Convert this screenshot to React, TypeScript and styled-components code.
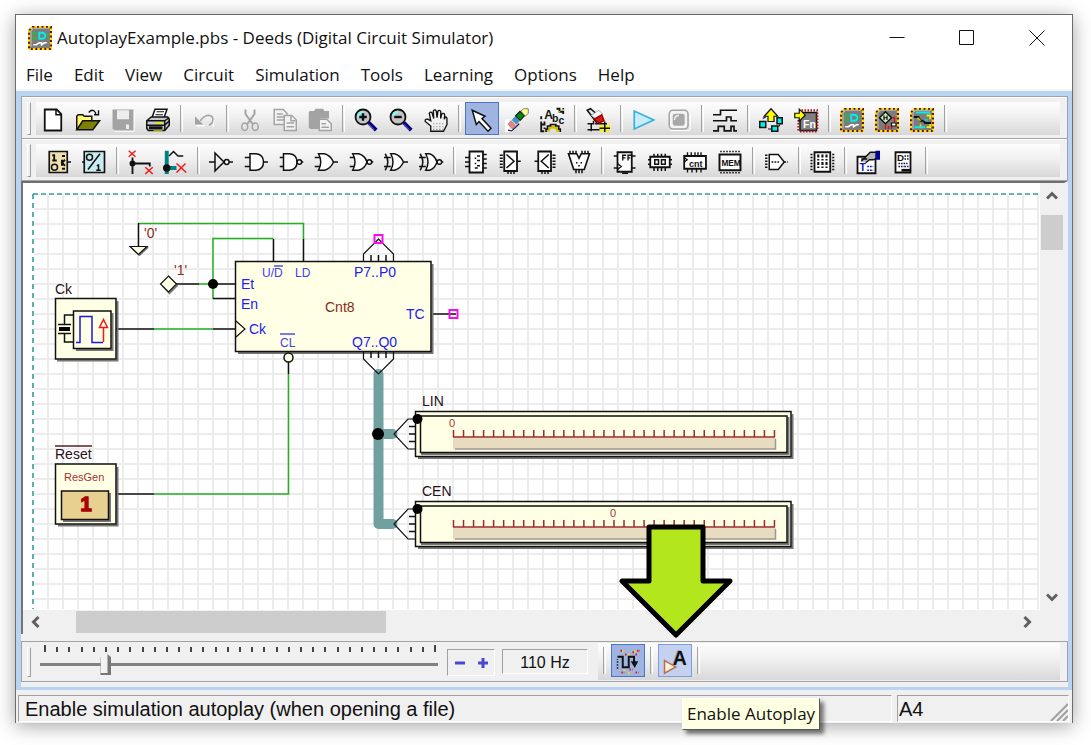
import React from "react";
import styled, { createGlobalStyle, css } from "styled-components";

const ui = `"Open Sans", "Noto Sans", sans-serif`;
const sans = `"Liberation Sans", Arial, sans-serif`;

const Global = createGlobalStyle`
  * { box-sizing: border-box; }
  body { margin: 0; background: #fff; color: #111; font-family: ${ui}; }
  button { font: inherit; color: inherit; border: 0; padding: 0; background: none; }
`;

/* ---------- window frame ---------- */

const Page = styled.div`
  display: flex;
  min-height: 100vh;
  padding: 14px 18px 22px 15px;
`;
const Window = styled.main`
  flex: 1;
  min-width: 0;
  display: flex;
  flex-direction: column;
  border: 1px solid #6c6c6c;
  border-bottom: 0;
  background: #f0f0f0;
  box-shadow: 0 3px 18px rgba(0, 0, 0, 0.36);
`;
const TitleBar = styled.header`
  display: flex;
  align-items: center;
  height: 46px;
  padding-left: 12px;
  background: #fff;
`;
const Title = styled.h1`
  flex: 1;
  margin: 0;
  padding-left: 5px;
  font-size: 17px;
  font-weight: 400;
  line-height: 24px;
  white-space: nowrap;
`;
const WindowButton = styled.button`
  display: grid;
  place-items: center;
  width: 70px;
  height: 46px;
`;
const MenuBar = styled.nav`
  display: flex;
  gap: 21px;
  height: 30px;
  padding-left: 10px;
  background: #fff;
  border-bottom: 2px solid #f4f4f4;
`;
const MenuItem = styled.button`
  font-size: 17px;
  line-height: 28px;
`;
const Workspace = styled.div`
  flex: 1;
  display: flex;
  flex-direction: column;
  padding: 5px 4px 3px 5px;
  background: #b8d4f2;
`;

/* ---------- tool bars ---------- */

const ToolRows = styled.div`
  border: 1px solid #a2a2a2;
  border-bottom: 0;
`;
const ToolRow = styled.div`
  display: flex;
  gap: 5px;
  padding: 5px 7px 3px 5px;
  background: #f0f0f0;
  border-bottom: 1px solid #a2a2a2;
  box-shadow: inset 0 1px #fff;
`;
const Grip = styled.span`
  width: 4px;
  border: 1px solid #a0a0a0;
  border-top-color: #fff;
  border-left-color: #fff;
`;
const face = css`
  background: linear-gradient(#fdfdfd, #f0f0f0 45%, #d8d8d8);
`;
const ToolStrip = styled.div<{ $indent?: number }>`
  ${face}
  flex: 1;
  display: flex;
  height: 33px;
  overflow: hidden;
  padding-left: ${(p) => p.$indent ?? 0}px;
`;
const Group = styled.div<{ $tight?: boolean }>`
  display: flex;
  gap: ${(p) => (p.$tight ? 0 : 1)}px;
`;
const ToolButton = styled.button<{ $state?: "on" | "hot" }>`
  display: grid;
  place-items: center;
  flex: none;
  width: 34px;
  height: 33px;
  padding-top: 2px;
  ${(p) => p.$state === "on" && "background:#a0b4e2;box-shadow:inset 0 0 0 1px #4a74c8;"}
  ${(p) => p.$state === "hot" && "background:#c4d2f0;box-shadow:inset 0 0 0 1px #7c9ae0;"}
`;
const Separator = styled.span<{ $wide?: boolean }>`
  flex: none;
  width: ${(p) => (p.$wide ? 13 : 12)}px;
  height: 27px;
  margin-top: 3px;
  background: linear-gradient(#a2a2a2, #a2a2a2) 5px 0 / 1px 100% no-repeat,
    linear-gradient(#fff, #fff) 7px 0 / 1px 100% no-repeat;
`;
const Glyph = styled.svg`
  display: block;
  width: 24px;
  height: 24px;
  overflow: visible;
  fill: none;
  stroke: #111;
  stroke-width: 1;
  text {
    stroke: none;
    fill: #111;
    font-family: ${sans};
    font-weight: 700;
  }
`;

const Icon = ({ children }: { children: React.ReactNode }) => (
  <Glyph viewBox="0 0 16 16" aria-hidden="true">{children}</Glyph>
);

/* Grey chip with the striped yellow and red rim shared by the Deeds tools */
const DeedsChip = ({ children }: { children: React.ReactNode }) => (
  <Icon>
    <path d="M3 .7h12.300v14.600H.7V3z" fill="#7c7c7c" stroke="#f4e400" strokeWidth="1.4" />
    <path d="M3 .7h12.300v14.600H.7V3z" stroke="#700c10" strokeWidth="1.4" strokeDasharray="1.3 1.7" />
    <path d="M2 14V3l1.500-1.500H14" stroke="#b8b8b8" strokeWidth=".8" />
    {children}
  </Icon>
);
const DeedsGate = () => (
  <DeedsChip>
    <path d="M7.500 4.500h1.500q2.500 0 2.500 2t-2.500 2H7.500z" stroke="#00f0f0" strokeWidth="1.200" />
    <path d="M3 5h3M3 8h3M12 6.500h2" stroke="#00d820" />
    <path d="M3.500 12.500h2l2-1.300h1.500v1.300l2-1.300h1.500" stroke="#fff" />
  </DeedsChip>
);

const grey = { stroke: "#a3a3a3" };
const icons: Record<string, React.ReactNode> = {
  New: (
    <Icon><path d="M2.500 1h8l3 3v11h-11z" fill="#fff" strokeWidth="1.200" /><path d="M10 1v3.500h3.500" /></Icon>
  ),
  Open: (
    <Icon>
      <path d="M.5 14.500v-9l1-1h3l1 1h5v3" fill="#ffff70" />
      <path d="M.5 14.500l4-6h11.200l-4.500 6z" fill="#808000" />
      <path d="M8.500 3q2.500-3 4.500 0v1M15 1.500v3h-3" strokeWidth=".9" />
    </Icon>
  ),
  Save: (
    <Icon>
      <path d="M1 1h14v14H2.500L1 13.500z" fill="#a3a3a3" stroke="none" />
      <path d="M4 1.500h8v6H4z" fill="#eee" stroke="none" />
      <path d="M10 11h2v3h-2z" fill="#eee" stroke="none" />
      <path d="M2 15.500h13.500V2" stroke="#fff" strokeWidth=".6" />
    </Icon>
  ),
  Print: (
    <Icon>
      <path d="M4 6.500L6 .8h8l-2 5.700" fill="#fff" />
      <path d="M7 2.500h5M6.300 4.500h5" strokeWidth=".8" />
      <path d="M.5 8.500l3-2.500h11l1 1.500v4l-3 3.500h-11l-1-1.500z" fill="#c8c8c8" />
      <path d="M.5 8.500h12v6.500M12.500 8.500l3-2M.5 11.500h12l3-3" />
      <path d="M2 13.200h9" strokeWidth="2" />
      <path d="M7 10h3.500" stroke="#f0e800" strokeWidth="1.200" />
      <path d="M5 15.200h6" stroke="#e0d800" strokeWidth=".7" />
    </Icon>
  ),
  Undo: (
    <Icon>
      <path d="M3 11.800h5.500M14 12.500q1-3.500-1-5" stroke="#fff" />
      <path d="M5.500 8.500Q8 5 11 4.800q4 .2 2.500 5l-2 1.700" {...grey} strokeWidth="1.100" />
      <path d="M2 5.500V11h5.500z" fill="#a3a3a3" stroke="none" />
    </Icon>
  ),
  Cut: (
    <Icon>
      <g {...grey}>
        <path d="M5 1v3l5 7M11 1v3l-5 7" strokeWidth="1.300" />
        <ellipse cx="4.500" cy="12.500" rx="2" ry="2.500" /><ellipse cx="11.500" cy="12.500" rx="2" ry="2.500" />
      </g>
    </Icon>
  ),
  Copy: (
    <Icon>
      <g {...grey} fill="#f2f2f2">
        <path d="M.8 1h6l2.500 2.500V11H.8z" /><path d="M2.500 4h4M2.500 6h5M2.500 8h5" />
        <path d="M7.500 5h5l3 3v7h-8z" /><path d="M12 5v3.500h3M9 10h5M9 12.500h5" />
      </g>
    </Icon>
  ),
  Paste: (
    <Icon>
      <path d="M1 2h3l1-1.500h5L11 2h3v5h-6v7H1.500L.5 13V3z" fill="#a3a3a3" stroke="none" />
      <path d="M7.500 7.500h5l3 3V15h-8z" fill="#f2f2f2" {...grey} />
      <path d="M9 10.500h3M9 12.800h5" {...grey} />
    </Icon>
  ),
  "Zoom in": (
    <Icon>
      <circle cx="6" cy="6" r="5" fill="#c4c4c4" strokeWidth="1.200" />
      <path d="M3 6q0-3 3-3.500" stroke="#7ff" strokeWidth="1.500" />
      <path d="M3.500 6h5M6 3.500v5" strokeWidth="1.600" />
      <path d="M9.800 9.800l5 5" stroke="#000080" strokeWidth="2.600" /><path d="M9.500 10.500l4 4" stroke="#88c" strokeWidth=".6" />
    </Icon>
  ),
  "Zoom out": (
    <Icon>
      <circle cx="6" cy="6" r="5" fill="#c4c4c4" strokeWidth="1.200" />
      <path d="M3 5q.5-2.500 3-2.500" stroke="#7ff" strokeWidth="1.500" />
      <path d="M3.500 6h5" strokeWidth="1.600" />
      <path d="M9.800 9.800l5 5" stroke="#000080" strokeWidth="2.600" /><path d="M9.500 10.500l4 4" stroke="#88c" strokeWidth=".6" />
    </Icon>
  ),
  Pan: (
    <Icon>
      <path d="M4.500 15.500V12L.8 9q-.3-2 1.700-1.500l2 1L3.500 3.500q1-1.500 2 0l1 3.500-.3-5q1-1.500 2 0l.5 4.500.6-4.500q1.200-1 1.900.5l-.1 4.500.7-3q1.500-1 2 .5l-.3 3 .8-1.500q1 0 1 1V11L13 15.500z" fill="#f2f2f2" strokeWidth=".9" />
      <path d="M6 10.500h8M6 12.500h7M6 14.300h7" stroke="#999" strokeDasharray="1 1" strokeWidth=".8" />
    </Icon>
  ),
  Select: (
    <Icon>
      <path d="M1.500 1.500l8.500 4-2 1.500 6 6.500-2 2-6-6.500-1.800 2z" fill="#fff" />
    </Icon>
  ),
  Erase: (
    <Icon>
      <path d="M0 8l3-1v7h3l-1 2H0z" fill="#fff" stroke="none" />
      <path d="M1.500 11.500L12 .5h3.500v3L5.500 14.500z" fill="#f5f0c0" stroke="none" />
      <path d="M2 10.800l2-2.300 3 3-2 2.500z" fill="#f08080" stroke="#888" strokeWidth=".5" />
      <path d="M4.500 8l2.500-2.800 3.200 3-2.500 3z" fill="#4a90c8" stroke="none" />
      <path d="M7 5.200l3-3 3 3-2.800 3z" fill="#008a10" stroke="#111" strokeWidth=".7" />
      <path d="M10.500 2l2-1.500h3v3l-2 2z" fill="#ffff90" stroke="#555" strokeWidth=".5" />
      <path d="M2 14.800l2.500.5 5-4.800" stroke="#311050" strokeWidth=".8" />
    </Icon>
  ),
  Properties: (
    <Icon>
      <text x="2.800" y="7.500" fontSize="8">A</text><text x="8" y="9.500" fontSize="7">b</text><text x="12.300" y="10.500" fontSize="7">c</text>
      <path d="M5.500 15.800a3.200 3.200 0 0 1 6.400 0" stroke="#d8c000" strokeWidth="2" />
      <path d="M4 16v-2h1v-2h2v-1h3.500v1h2v2h1v2" strokeWidth="1.100" />
      <path d="M.8 5.500v2M.8 9v6.500h2M3 9v2h-2M3 13v1" strokeWidth="1.200" />
      <path d="M11 .5h2v2h2.500V4M15.500 0v1" strokeWidth="1.200" />
      <path d="M12 2.500h1.500M14.500 1h1" stroke="#d8c000" />
    </Icon>
  ),
  Probe: (
    <Icon>
      <path d="M9 11h7v5H9z" fill="#f4f030" stroke="none" />
      <path d="M1 10.500h4v-2M1 14.500h8M3.500 10.500v5M6 10.500h8M12.500 9v7M9 13.500h7" />
      <path d="M.8 1.500L3 .5l7 6-3 3z" fill="#e8e8e8" />
      <path d="M3.500 5l5-3.500 2.500 2.500-4 3.500z" fill="#fff" stroke="#999" strokeWidth=".6" />
      <path d="M5.500 7.500l5-3 1.500 4-3 1.500z" fill="#d81818" stroke="#a00" />
    </Icon>
  ),
  Run: (
    <Icon><path d="M1.500 2v12l13-6z" fill="#c8ecfa" stroke="#35b0dc" strokeWidth="1.100" /></Icon>
  ),
  Stop: (
    <Icon>
      <rect x="1.500" y="1.500" width="12.500" height="12.500" rx="2.500" fill="#f4f4f4" stroke="#a3a3a3" />
      <rect x="3.800" y="3.800" width="8" height="8" rx="1.500" fill="#a8a8a8" stroke="none" />
      <path d="M5 8q0-3 3-3" stroke="#eee" /><path d="M2 15h12.500l1-1V3" stroke="#fff" strokeWidth=".7" />
    </Icon>
  ),
  "Timing diagram": (
    <Icon><path d="M0 4.500h5v-3h11M0 8.500h9v-2.500h3v2.500h4M0 15.200h3.500v-3h4v3h4.500v-3h2v3h2" strokeWidth="1.100" /></Icon>
  ),
  "Export circuit": (
    <Icon>
      <path d="M.5 9h4v4h-4zM8.500 12h4v3.500h-4zM12 6.500h3.500v4H12z" fill="#00f0f0" />
      <path d="M2.500 7l2-1M6 14l2 0M13 12.500l1-1.500" strokeWidth=".8" />
      <path d="M8 .5l4.500 5H10V9H6V5.500H3.500z" fill="#ffff00" strokeWidth=".8" />
    </Icon>
  ),
  "Import block": (
    <Icon>
      <path d="M4 3h11v12H4z" fill="#808080" />
      <path d="M5 1.500h11M15.500 3v12M4 15.500h11M3 8v7" stroke="#a01818" strokeDasharray="1 1" strokeWidth="1.500" />
      <text x="6" y="13" fontSize="7" style={{ fill: "#fff" }}>Fn</text>
      <path d="M.5 3.500h3V.8l4 4-4 4V6.500h-3z" fill="#ffff00" strokeWidth=".8" />
    </Icon>
  ),
  "Circuit simulator": <DeedsGate />,
  "Machine simulator": (
    <DeedsChip>
      <path d="M7 2.500l4 4-4 4-4-4z" fill="#c8e8c0" /><path d="M5.500 6.500h3M6 5v3M8 5v3" strokeWidth=".8" />
      <path d="M7 11v3M9 14v-2M11.500 6.500h1.500v3M11 14v-2" stroke="#e01010" />
      <path d="M11 10h3v2h-3z" fill="#fff" strokeWidth=".8" />
    </DeedsChip>
  ),
  "Micro emulator": (
    <DeedsChip>
      <path d="M4 3h9.500M3 12.800h7" stroke="#00f0f0" strokeWidth="1.300" />
      <path d="M11 5h2.500v2.500M11 12.800h2.500v-3" stroke="#f0f000" strokeWidth="1.200" />
      <path d="M2.500 6h3l1.500 2.500h2l1 1.500h4" strokeWidth="1.400" /><path d="M9 8h3" stroke="#00d8d8" />
      <path d="M7 10.500v2M5 6.500l2 2" stroke="#f0d000" />
    </DeedsChip>
  ),

  "Input components": (
    <Icon>
      <path d="M1.500 1h12v14h-12z" fill="#efe0b0" strokeWidth="1.100" /><path d="M13.500 8H16" />
      <path d="M4.800 2.800V7M3.500 3.500h1.300M3.500 7h3" strokeWidth="1.200" /><circle cx="5" cy="11.500" r="2" />
      <path d="M10 4h2M10 12.500h2M10 6.500v4M12 6.500l-2 2 2 2" strokeWidth="1.300" />
    </Icon>
  ),
  "Output components": (
    <Icon>
      <path d="M1.500 1h13.500v14H1.500z" fill="#c8ecf2" strokeWidth="1.100" /><path d="M0 8h1.500" />
      <circle cx="5" cy="4.800" r="2" /><path d="M4 13L12 2.500M11 9.500v4M9.800 10.300h1.200M9.500 13.500h3" />
    </Icon>
  ),
  Wire: (
    <Icon>
      <path d="M3 5v11M3 9h11.500v2" strokeWidth="1.200" /><circle cx="3" cy="9" r="1.500" fill="#111" />
      <path d="M.5.500l4.500 4M5 .5l-4.500 4M11.500 11.500l5 4.500M16.500 11.500l-5 4.500" stroke="#f01818" />
    </Icon>
  ),
  Bus: (
    <Icon>
      <path d="M2.500.5v15.500M3 12h6" stroke="#008080" strokeWidth="2.600" /><circle cx="2.500" cy="12" r="2" fill="#111" />
      <path d="M4 4l3-3 3 3h3.500" /><path d="M9 9l6.500 6M15 9l-6 6" stroke="#f01818" />
    </Icon>
  ),
  NOT: <Icon><path d="M0 8h4M4 2v12l6-6zM13.400 8h2.600" /><circle cx="11.800" cy="8" r="1.600" fill="#fff" /></Icon>,
  AND: <Icon><path d="M4 2.500h4q5 .5 5 5.500t-5 5.500H4z" fill="#fff" /><path d="M.5 5H4M.5 11H4M13 8h3" /></Icon>,
  NAND: <Icon><path d="M3 2.500h4q5 .5 5 5.500t-5 5.500H3z" fill="#fff" /><path d="M.5 5H3M.5 11H3M15.200 8h1" /><circle cx="13.600" cy="8" r="1.500" fill="#fff" /></Icon>,
  OR: <Icon><path d="M3 2.500h4q4 1 6 5.500-2 4.500-6 5.500H3q3-5.500 0-11z" fill="#fff" /><path d="M.5 5H4M.5 11H4M13 8h3" /></Icon>,
  NOR: <Icon><path d="M2.500 2.500h4q4 1 5.500 5.500-1.500 4.500-5.500 5.500h-4q3-5.500 0-11z" fill="#fff" /><path d="M.5 5h3M.5 11h3M15.200 8h1" /><circle cx="13.600" cy="8" r="1.500" fill="#fff" /></Icon>,
  XOR: <Icon><path d="M4.500 2.500H7q4 1 6 5.500-2 4.500-6 5.500H4.500q3-5.500 0-11z" fill="#fff" /><path d="M.8 2.500q3.500 5.500 0 11M0 5h4.500M0 11h4.500M13 8h3" /></Icon>,
  XNOR: <Icon><path d="M4.500 2.500H7q3.500 1 5 5.500-1.500 4.500-5 5.500H4.500q3-5.500 0-11z" fill="#fff" /><path d="M.8 2.500q3.500 5.500 0 11M0 5h4.500M0 11h4.500M15.200 8h1" /><circle cx="13.600" cy="8" r="1.500" fill="#fff" /></Icon>,
  Decoder: (
    <Icon>
      <path d="M3 1h9v14H3z" fill="#fff" strokeWidth="1.200" />
      <path d="M0 5h3M0 8h3M0 11h3M12 3h2.500M12 6h2.500M12 9h2.500M12 12h2.500" />
      <path d="M8 4h2M6.500 5.500h1M8 7h2M6.500 9h1M8 10.500h2M6.500 12h2" />
    </Icon>
  ),
  Multiplexer: (
    <Icon>
      <path d="M3.500 1h8.500v13H3.500z" fill="#fff" strokeWidth="1.200" /><path d="M5 3l5 4.500L5 12M12 7.500h2.500M6 14v2M8 14v2M10 14v2" />
      <path d="M1.500 3v10" strokeDasharray="1 1" strokeWidth="2" />
    </Icon>
  ),
  Demultiplexer: (
    <Icon>
      <path d="M3.500 1h8.500v13H3.500z" fill="#fff" strokeWidth="1.200" /><path d="M10.500 3l-5 4.500 5 4.500M1 7.500h2.500M6 14v2M8 14v2M10 14v2" />
      <path d="M14 3v10" strokeDasharray="1 1" strokeWidth="2" />
    </Icon>
  ),
  ALU: (
    <Icon>
      <path d="M1 2.500h5.500L8 5.500l1.500-3H15L11.500 13h-7z" fill="#fff" strokeWidth="1.100" />
      <path d="M2 .5v2M4 .5v2M6 .5v2M10 .5v2M12 .5v2M14 .5v2M6 13v2.500M8 13v2.500M10 13v2.500" />
      <path d="M6 8.500h1M9 8.500h1M7.500 10.500h1" />
    </Icon>
  ),
  "Flip-flop": (
    <Icon>
      <path d="M3 1.500h9.500v13H3z" fill="#fff" strokeWidth="1.200" />
      <path d="M.5 4H3M.5 12H3M12.500 4H15M12.500 12H15M6 15.500h4M3 9l2.500 2L3 13M6.500 7V3.500h2.300M6.500 5.200h1.800M10 7V3.500h2M10 5.200h1.500" strokeWidth=".9" />
    </Icon>
  ),
  Register: (
    <Icon>
      <path d="M1.500 4.500h13v7h-13z" fill="#fff" strokeWidth="1.200" />
      <path d="M4.500 6.500h2.500v3H4.500zM9 6.500h2.500v3H9zM0 6.500h1.500M0 9.500h1.500M14.500 6.500H16M14.500 9.500H16M4 2.500v2M6.500 2.500v2M9 2.500v2M11.500 2.500v2M4 11.500v2.500M6.500 11.500v2.500M9 11.500v2.500M11.500 11.500v2.500" />
    </Icon>
  ),
  Counter: (
    <Icon>
      <path d="M.8 4h14.500v8.500H.8z" fill="#fff" strokeWidth="1.200" />
      <text x="4" y="11" fontSize="6">cnt</text>
      <path d="M3 1.500V4M5.500 1.500V4M8 1.500V4M10 1.500V4M12 1.500V4M3 12.500V15M6 12.500V15M9 12.500V15M12 12.500V15M.8 5l2 1.500-2 1.500" strokeWidth=".9" />
    </Icon>
  ),
  Memory: (
    <Icon>
      <path d="M1 3h14v10.500H1z" fill="#fff" strokeWidth="1.300" />
      <path d="M1.500 1h13M1.500 15.200h13" strokeDasharray="1 1" />
      <text x="2.300" y="10.500" fontSize="5.500">MEM</text>
    </Icon>
  ),
  Converter: (
    <Icon>
      <path d="M3.500 3h6l4 5-4 5h-6z" fill="#fff" /><path d="M5 8h5M13.500 8H16" strokeDasharray="1.200 .8" />
      <path d="M1.500 3v10" strokeDasharray="1 1" strokeWidth="1.600" />
    </Icon>
  ),
  "Truth table": (
    <Icon>
      <path d="M3 1.500h10.500v13H3z" fill="#fff" strokeWidth="1.200" />
      <path d="M1 2.500v12M15.500 2.500v12" strokeDasharray="1 1" strokeWidth="1.400" />
      <path d="M5.500 3v10M8.300 3v10M11 3v10" strokeDasharray="2 1 1 1" strokeWidth="1.400" />
    </Icon>
  ),
  "Text label": (
    <Icon>
      <path d="M1 4.500h12v11H1z" fill="#fff" strokeWidth="1.200" />
      <path d="M3.500 6h4M3.500 7.500l6-6h4v4l-2 1H9L6.500 8.500" fill="#b8b8b8" strokeWidth=".9" />
      <path d="M13 .5h3v6h-3z" fill="#000090" stroke="none" />
      <text x="2.300" y="14" fontSize="7" style={{ fill: "#1818b0" }}>T</text>
      <path d="M7.500 11h4M7.500 13.500h4" stroke="#1818b0" strokeDasharray="1.200 .6" />
    </Icon>
  ),
  "Document block": (
    <Icon>
      <path d="M3 1.500h10v13.500H3z" fill="#fff" strokeWidth="1.200" />
      <text x="4" y="7.500" fontSize="6.500">D</text>
      <path d="M9 4h3M9 6h3M5 9h6M5 11h4" strokeDasharray="1 .7" strokeWidth=".9" /><path d="M7 13.500h6" strokeWidth="1.800" />
      <path d="M9 11h3" stroke="#1818b0" strokeDasharray="1 .7" />
    </Icon>
  ),
  "Trace signals": (
    <Icon>
      <path d="M4 1h2M8 3h2M12 1h1M5 13.500h1M8 15.500h2" stroke="#f0e000" strokeWidth="1.400" strokeDasharray="1 .8" />
      <path d="M3 .5h1M6 3h1M11 1.500h1M14 .5h2M13 3h1M3.500 15h2M9 13h2M13 15h2" stroke="#e81010" strokeWidth="1.400" strokeDasharray="1 .7" />
      <path d="M1 12.500V6" strokeDasharray="1 1" /><path d="M1 4.500h3.500v7h4v-7H12v4" strokeWidth="1.300" />
      <path d="M9.800 7.500h5L12.500 12z" fill="#111" stroke="none" />
    </Icon>
  ),
  "Enable autoplay": (
    <Icon>
      <path d="M1 7v8.500l7.500-4.200z" fill="#fff0e0" stroke="#b87048" />
      <text x="6" y="9.500" fontSize="13" style={{ fill: "#9aa6c0" }}>A</text>
      <text x="6.500" y="10" fontSize="13">A</text>
    </Icon>
  ),
};

type Bar = { tools: string[]; tight?: boolean }[];
const mainBar: Bar = [
  { tools: ["New", "Open", "Save", "Print"] },
  { tools: ["Undo"] },
  { tools: ["Cut", "Copy", "Paste"] },
  { tools: ["Zoom in", "Zoom out", "Pan"] },
  { tools: ["Select", "Erase", "Properties"] },
  { tools: ["Probe"] },
  { tools: ["Run", "Stop"] },
  { tools: ["Timing diagram"] },
  { tools: ["Export circuit", "Import block"] },
  { tools: ["Circuit simulator", "Machine simulator", "Micro emulator"] },
];
const partsBar: Bar = [
  { tools: ["Input components", "Output components"] },
  { tools: ["Wire", "Bus"] },
  { tools: ["NOT", "AND", "NAND", "OR", "NOR", "XOR", "XNOR"] },
  { tools: ["Decoder", "Multiplexer", "Demultiplexer", "ALU"], tight: true },
  { tools: ["Flip-flop", "Register", "Counter", "Memory"] },
  { tools: ["Converter"] },
  { tools: ["Truth table"] },
  { tools: ["Text label", "Document block"] },
];

const Toolbar = ({ bar, indent, label }: { bar: Bar; indent?: number; label: string }) => (
  <ToolRow role="toolbar" aria-label={label}>
    <Grip />
    <ToolStrip $indent={indent}>
      {bar.map((g, i) => (
        <React.Fragment key={i}>
          <Group $tight={g.tight}>
            {g.tools.map((t) => (
              <ToolButton key={t} aria-label={t} $state={t === "Select" ? "on" : undefined}>{icons[t]}</ToolButton>
            ))}
          </Group>
          <Separator />
        </React.Fragment>
      ))}
    </ToolStrip>
  </ToolRow>
);

/* ---------- schematic view ---------- */

const View = styled.section`
  flex: 1;
  display: grid;
  grid-template-columns: minmax(0, 1fr) 24px;
  grid-template-rows: minmax(240px, 1fr) 24px;
  min-height: 0;
  border: solid #f0f0f0;
  border-width: 0 4px 0 0;
  border-top: 2px solid #6f6f6f;
  border-left: 2px solid #747474;
  background: #f0f0f0;
`;
const Canvas = styled.div`
  height: 0;
  min-height: 100%;
  overflow: hidden;
  background: #fff;
`;
const Sheet = styled.svg`
  display: block;
  fill: none;
  stroke: #111;
  stroke-width: 1.5;
  text { font-family: ${sans}; font-size: 14px; stroke: none; fill: #2020f0; }
  text.small { font-size: 12px; fill: #4040f0; }
  text.name { fill: #2a1020; }
  text.value { fill: #8a2a18; }
  text.tiny { font-size: 11px; fill: #a83030; }
  .wire { stroke: #22b022; }
  .bus { stroke: #70a0a0; stroke-width: 10; stroke-linecap: round; stroke-linejoin: round; }
  .part { fill: #ffffe6; }
  .shade { stroke: #777; stroke-width: 2; }
  .free { stroke: #f010f0; stroke-width: 2; }
  .thin { stroke-width: 1.2; }
  .dot { fill: #000; stroke: none; }
  .scale { stroke: #a02828; }
`;
const VScroll = styled.div`
  display: flex;
  flex-direction: column;
  align-items: center;
  background: #f0f0f0;
`;
const HScroll = styled.div`
  display: flex;
  align-items: center;
  background: #f0f0f0;
`;
const ScrollButton = styled.button`
  display: grid;
  place-items: center;
  flex: none;
  width: 26px;
  height: 26px;
  svg { display: block; fill: none; stroke: #606060; stroke-width: 3; }
`;
const Thumb = styled.span<{ $w: number; $h: number; $vertical?: boolean }>`
  flex: none;
  width: ${(p) => p.$w}px;
  height: ${(p) => p.$h}px;
  margin: ${(p) => (p.$vertical ? "6px 0 0" : "0 0 0 27px")};
  background: #cdcdcd;
`;
const Spring = styled.span`flex: 1;`;

const Chevron = ({ turn }: { turn: number }) => (
  <svg width="12" height="12" viewBox="0 0 12 12" aria-hidden="true">
    <path d="M1 8.500l5-5 5 5" transform={`rotate(${turn} 6 6)`} />
  </svg>
);

const ticks = Array.from({ length: 33 }, (_, i) => i);

const Display = ({ y, zero, name }: { y: number; zero: number; name: string }) => (
  <g transform={`translate(0 ${y})`}>
    <text className="name" x="422" y="-5">{name}</text>
    <path className="shade" d="M418 47h374.500V3" />
    <path className="part" d="M415.500.500h375.500v45h-375.500z" />
    <path className="shade" d="M421 43h367.500V6" />
    <path className="part" d="M420.500 5h366.500v36.500h-366.500z" />
    <path d="M453 27h323v11.500h-323z" fill="#e8dcc0" stroke="none" />
    <path d="M455 38h320.500V28" stroke="#999" />
    <path className="scale" d={"M453 26h322" + ticks.map((i) => `M${453.5 + i * 10.03} 19v7`).join("")} />
    <text className="tiny" x={zero} y="16" textAnchor="middle">0</text>
    <path className="thin" d="M416 8h-8l-14 15 14 15h8" />
    <path d="M409 15.500h6M409 23h6M409 30.500h6" />
    <circle className="dot" cx="417.500" cy="8" r="5" />
  </g>
);

const Schematic = () => (
  <Sheet width="1017" height="427" viewBox="23 183 1017 427" role="img" aria-label="Counter circuit">
    <defs>
      <pattern id="grid" x="47" y="208" width="15" height="15" patternUnits="userSpaceOnUse">
        <path d="M0 0h15v2H2v13H0z" fill="#ececec" stroke="none" />
      </pattern>
    </defs>
    <rect x="34" y="194" width="1005" height="415" fill="url(#grid)" stroke="none" />
    <path d="M33 194h1005" stroke="#3a9e9e" strokeDasharray="5 3" />
    <path d="M33 194v415" stroke="#2a9494" strokeDasharray="5 4" />

    <path className="wire" d="M138 223.500h165.500V239M213 284v-45.500h60.500M199 284h14v15M154 329h59M288.500 374v120H154" />
    <path d="M138.500 223v24M176 284h23M213 284h23M213 298.500h23M273.500 239v22M303.500 239v22M116 329h38M213 329h23M288.500 362v12M116 494h38M432 314h24" />
    <path d="M133 249l6.500 6 8.500-8" className="shade" />
    <path className="part thin" d="M130 246.500h17l-8.500 8z" />
    <path d="M163 286l6.500 7 8-8" className="shade" />
    <path className="part thin" d="M168.500 276l8 8-8 8-8-8z" />
    <text className="value" x="144" y="238">'0'</text>
    <text className="value" x="174" y="275">'1'</text>
    <circle className="dot" cx="213" cy="284" r="5" />

    <path className="bus" d="M378.500 374v150h14M378.500 434h14" />
    <circle className="dot" cx="378" cy="434" r="6" />

    <path className="shade" d="M238 353h194.500V264" />
    <path className="part" d="M235.500 261.500h195.500v90h-195.500z" />
    <path className="thin" d="M236 321l9 8-9 8M363.500 261v-7l15-15 15 15v7M363.500 352v7l15 15 15-15v-7" />
    <path d="M371 255v6M378.500 255v6M386 255v6M371 352v6M378.500 352v6M386 352v6" />
    <circle className="part" cx="288.500" cy="357.500" r="4.500" />
    <path className="free" d="M374.500 235h8v8h-8zM449.500 310h8v8h-8z" />
    <text className="small" x="262" y="277">U/D</text>
    <text className="small" x="295" y="277">LD</text>
    <text className="small" x="280" y="347">CL</text>
    <path d="M274 266h9M280 334h15" stroke="#5050f0" />
    <text x="241" y="289">Et</text>
    <text x="241" y="309">En</text>
    <text x="249" y="334">Ck</text>
    <text x="354" y="277">P7..P0</text>
    <text x="352" y="347">Q7..Q0</text>
    <text x="406" y="319">TC</text>
    <text className="value" x="325" y="312">Cnt8</text>

    <text className="name" x="55" y="294">Ck</text>
    <path className="shade" d="M57 360.500h60.500V301" />
    <path className="part" d="M55.500 298.500h60.500v60.500h-60.500z" />
    <path d="M74 315h-9.500v9M58 324.500h13M58 333.500h13M64.500 334v8h9.500" />
    <path className="dot" d="M59 327h11v4H59z" />
    <path className="shade" d="M76 350h36.500V313" />
    <path className="part" d="M73.500 311h37.500v37.500h-37.500z" />
    <path d="M76 342.500h4v-26h12v26h11" stroke="#1818f0" />
    <path d="M103.500 342v-14M103.500 319.500l4 8h-8z" stroke="#f01818" />

    <text className="name" x="55" y="459">Reset</text>
    <path d="M55 446h37" stroke="#5a2020" />
    <path className="shade" d="M58 525.500h59.500V467" />
    <path className="part" d="M55.500 464h60.500v60h-60.500z" />
    <text className="tiny" x="64" y="481">ResGen</text>
    <path className="shade" d="M63 521h47V493" />
    <path d="M61.500 491h47v28.500h-47z" fill="#e8d090" />
    <text x="86" y="511" textAnchor="middle" style={{ fontSize: 20, fontWeight: 700, fill: "#a80000", stroke: "#a80000" }}>1</text>

    <Display y={411} zero={452} name="LIN" />
    <Display y={501} zero={613} name="CEN" />
  </Sheet>
);

/* ---------- speed bar ---------- */

const SpeedRow = styled.div`
  display: flex;
  align-items: flex-start;
  height: 41px;
  margin-top: 7px;
  padding: 1px 7px 0 5px;
  background: #f0f0f0;
  border: 1px solid #a2a2a2;
  box-shadow: 0 -7px #f0f0f0, 0 5px #f0f0f0, 0 1px #fff;
`;
const SpeedGrip = styled(Grip)`
  height: 30px;
  margin: 4px 6px 0 0;
`;
const Speed = styled.label`
  display: block;
  width: 398px;
  margin: 2px 9px 0 3px;
`;
const Scale = styled.span`
  display: flex;
  justify-content: space-between;
  align-items: flex-end;
  height: 7px;
  padding: 0 2px 0 4px;
`;
const Tick = styled.i<{ $end: boolean }>`
  width: 2px;
  height: ${(p) => (p.$end ? 7 : 5)}px;
  background: #444;
`;
const Slider = styled.input`
  appearance: none;
  display: block;
  width: 100%;
  height: 24px;
  margin: 0;
  background: linear-gradient(#808080, #808080) 0 11px / 100% 3px no-repeat;
  &::-webkit-slider-thumb {
    appearance: none;
    width: 11px;
    height: 22px;
    background: linear-gradient(90deg, #a0a0a0 1px, #f4f4f4 1px, #f0f0f0 7px, #777 8px);
    border-bottom: 2px solid #777;
    clip-path: polygon(50% 0, 100% 20%, 100% 100%, 0 100%, 0 20%);
  }
`;
const Spinner = styled.div`
  display: flex;
  width: 48px;
  height: 27px;
  margin: 6px 7px 0 0;
  border: 1px solid #a0a0a0;
  border-color: #a0a0a0 #fff #fff #a0a0a0;
  button { flex: 1; display: grid; place-items: center; }
  path { stroke: #4848d0; stroke-width: 3; }
`;
const Rate = styled.output`
  width: 86px;
  height: 25px;
  margin: 6px 10px 0 0;
  border: 1px solid #a0a0a0;
  border-color: #a0a0a0 #fff #fff #a0a0a0;
  font: 16px/26px ${sans};
  text-align: center;
`;
const SpeedTools = styled.div`
  ${face}
  flex: 1;
  display: flex;
  height: 37px;
  padding-top: 1px;
`;
const AutoplaySpot = styled.div`
  position: relative;
  height: 33px;
`;
const Pointer = styled.svg`
  position: absolute;
  z-index: 2;
  left: -39px;
  bottom: 39px;
`;
const Tooltip = styled.div`
  position: absolute;
  z-index: 2;
  left: 24px;
  top: 54px;
  padding: 3px 4px;
  border: 1px solid #fff;
  border-right-color: #555;
  border-bottom-color: #555;
  background: #ffffe1;
  box-shadow: 4px 4px 4px rgba(0, 0, 0, 0.5);
  font-size: 17px;
  line-height: 24px;
  white-space: nowrap;
`;

/* ---------- status bar ---------- */

const StatusBar = styled.footer`
  display: flex;
  gap: 5px;
  height: 33px;
  padding: 5px 3px 1px 2px;
  background: #f0f0f0;
`;
const StatusCell = styled.div<{ $w?: number }>`
  ${(p) => (p.$w ? `width:${p.$w}px;flex:none;padding-left:1px;` : "flex:1;padding-left:6px;")}
  display: flex;
  justify-content: space-between;
  align-items: flex-end;
  border: 1px solid #a0a0a0;
  border-color: #a0a0a0 #fff #fff #a0a0a0;
  font: 20px/24px ${sans};
  white-space: nowrap;
`;

const menus = ["File", "Edit", "View", "Circuit", "Simulation", "Tools", "Learning", "Options", "Help"];

export default function App() {
  return (
    <>
      <Global />
      <Page>
        <Window>
          <TitleBar>
            <DeedsGate />
            <Title>AutoplayExample.pbs - Deeds (Digital Circuit Simulator)</Title>
            {[
              ["Minimize", "M.500 7.500h15"],
              ["Maximize", "M.500.500h14v14h-14z"],
              ["Close", "M.500.500l15 15M15.500.500l-15 15"],
            ].map(([name, d]) => (
              <WindowButton key={name} aria-label={name}>
                <svg width="16" height="16" fill="none" stroke="#111" strokeWidth="1"><path d={d} /></svg>
              </WindowButton>
            ))}
          </TitleBar>
          <MenuBar>
            {menus.map((m) => <MenuItem key={m}>{m}</MenuItem>)}
          </MenuBar>
          <Workspace>
            <ToolRows>
              <Toolbar bar={mainBar} label="Main" />
              <Toolbar bar={partsBar} indent={6} label="Components" />
            </ToolRows>
            <View>
              <Canvas><Schematic /></Canvas>
              <VScroll>
                <ScrollButton aria-label="Scroll up"><Chevron turn={0} /></ScrollButton>
                <Thumb $w={22} $h={35} $vertical />
                <Spring />
                <ScrollButton aria-label="Scroll down"><Chevron turn={180} /></ScrollButton>
              </VScroll>
              <HScroll>
                <ScrollButton aria-label="Scroll left"><Chevron turn={-90} /></ScrollButton>
                <Thumb $w={310} $h={22} />
                <Spring />
                <ScrollButton aria-label="Scroll right"><Chevron turn={90} /></ScrollButton>
              </HScroll>
            </View>
            <SpeedRow>
              <SpeedGrip />
              <Speed>
                <Scale>{ticks.map((i) => <Tick key={i} $end={i === 0 || i === 32} />)}</Scale>
                <Slider type="range" min={0} max={32} defaultValue={5} aria-label="Simulation speed" />
              </Speed>
              <Spinner>
                <button aria-label="Slower"><svg width="10" height="10"><path d="M0 5h10" /></svg></button>
                <button aria-label="Faster"><svg width="10" height="10"><path d="M0 5h10M5 0v10" /></svg></button>
              </Spinner>
              <Rate>110 Hz</Rate>
              <SpeedTools>
                <Separator $wide />
                <ToolButton $state="on" aria-label="Trace signals">{icons["Trace signals"]}</ToolButton>
                <Separator $wide />
                <AutoplaySpot>
                  <ToolButton $state="hot" aria-label="Enable autoplay">{icons["Enable autoplay"]}</ToolButton>
                  <Pointer width="114" height="114" viewBox="0 0 114 114" aria-hidden="true">
                    <path d="M30 3h54v54h27L57 111 3 57h27z" fill="#b4e61d" stroke="#000" strokeWidth="5" strokeLinejoin="round" />
                  </Pointer>
                  <Tooltip role="tooltip">Enable Autoplay</Tooltip>
                </AutoplaySpot>
                <Separator $wide />
              </SpeedTools>
            </SpeedRow>
            <Spring style={{ flex: "0 0 5px" }} />
          </Workspace>
          <StatusBar>
            <StatusCell>Enable simulation autoplay (when opening a file)</StatusCell>
            <StatusCell $w={172}>
              A4
              <svg width="18" height="18" stroke="#a0a0a0" strokeWidth="2" aria-hidden="true">
                <path d="M1 18L18 1M7 18L18 7M13 18l5-5" />
              </svg>
            </StatusCell>
          </StatusBar>
        </Window>
      </Page>
    </>
  );
}
